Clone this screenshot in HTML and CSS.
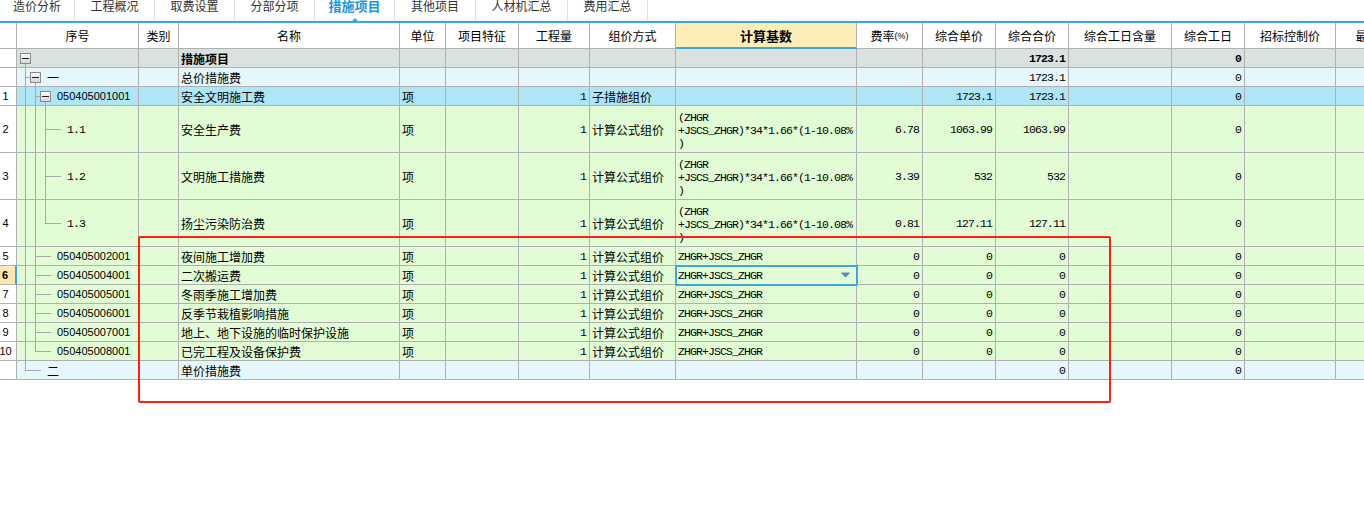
FILE: index.html
```html
<!DOCTYPE html>
<html lang="zh-CN">
<head>
<meta charset="utf-8">
<title>措施项目</title>
<link rel="stylesheet" href="styles.css">
</head>
<body>
<div class="tabs">
  <div class="tab w75"><span class="lb">造价分析</span></div>
  <div class="tab w80"><span class="lb">工程概况</span></div>
  <div class="tab w80"><span class="lb">取费设置</span></div>
  <div class="tab w80"><span class="lb">分部分项</span></div>
  <div class="tab w80 on"><span class="lb">措施项目</span><i class="tri"></i></div>
  <div class="tab w81"><span class="lb">其他项目</span></div>
  <div class="tab w92"><span class="lb">人材机汇总</span></div>
  <div class="tab w80"><span class="lb">费用汇总</span></div>
</div>
<div class="bar"></div>
<div class="grid">
  <div class="row hd">
    <div class="c rn"></div>
    <div class="c">序号</div>
    <div class="c">类别</div>
    <div class="c">名称</div>
    <div class="c">单位</div>
    <div class="c">项目特征</div>
    <div class="c">工程量</div>
    <div class="c">组价方式</div>
    <div class="c act">计算基数</div>
    <div class="c">费率<span class="sm">(%)</span></div>
    <div class="c">综合单价</div>
    <div class="c">综合合价</div>
    <div class="c">综合工日含量</div>
    <div class="c">综合工日</div>
    <div class="c">招标控制价</div>
    <div class="c">最高限价</div>
  </div>

  <div class="row r0">
    <div class="c rn"></div>
    <div class="c tree"><span class="sl b"><i class="bx"></i></span></div>
    <div class="c"></div>
    <div class="c"><b>措施项目</b></div>
    <div class="c"></div><div class="c"></div><div class="c"></div><div class="c"></div><div class="c"></div>
    <div class="c"></div><div class="c"></div>
    <div class="c n m"><b>1723.1</b></div>
    <div class="c"></div>
    <div class="c n m"><b>0</b></div>
    <div class="c"></div><div class="c"></div>
  </div>

  <div class="row r1">
    <div class="c rn"></div>
    <div class="c tree"><span class="sl t"></span><span class="sl b"><i class="bx"></i></span><span class="tx">一</span></div>
    <div class="c"></div>
    <div class="c">总价措施费</div>
    <div class="c"></div><div class="c"></div><div class="c"></div><div class="c"></div><div class="c"></div>
    <div class="c"></div><div class="c"></div>
    <div class="c n m">1723.1</div>
    <div class="c"></div>
    <div class="c n m">0</div>
    <div class="c"></div><div class="c"></div>
  </div>

  <div class="row rs">
    <div class="c rn">1</div>
    <div class="c tree"><span class="sl v"></span><span class="sl t"></span><span class="sl b"><i class="bx"></i></span><span class="tx cd">050405001001</span></div>
    <div class="c"></div>
    <div class="c">安全文明施工费</div>
    <div class="c">项</div>
    <div class="c"></div>
    <div class="c n m">1</div>
    <div class="c">子措施组价</div>
    <div class="c"></div>
    <div class="c"></div>
    <div class="c n m">1723.1</div>
    <div class="c n m">1723.1</div>
    <div class="c"></div>
    <div class="c n m">0</div>
    <div class="c"></div><div class="c"></div>
  </div>

  <div class="row rg tall">
    <div class="c rn">2</div>
    <div class="c tree"><span class="sl v"></span><span class="sl v"></span><span class="sl t"></span><span class="e"></span><span class="tx m">1.1</span></div>
    <div class="c"></div>
    <div class="c">安全生产费</div>
    <div class="c">项</div>
    <div class="c"></div>
    <div class="c n m">1</div>
    <div class="c">计算公式组价</div>
    <div class="c fx m"><span>(ZHGR<br>+JSCS_ZHGR)*34*1.66*(1-10.08%<br>)</span></div>
    <div class="c n m">6.78</div>
    <div class="c n m">1063.99</div>
    <div class="c n m">1063.99</div>
    <div class="c"></div>
    <div class="c n m">0</div>
    <div class="c"></div><div class="c"></div>
  </div>

  <div class="row rg tall">
    <div class="c rn">3</div>
    <div class="c tree"><span class="sl v"></span><span class="sl v"></span><span class="sl t"></span><span class="e"></span><span class="tx m">1.2</span></div>
    <div class="c"></div>
    <div class="c">文明施工措施费</div>
    <div class="c">项</div>
    <div class="c"></div>
    <div class="c n m">1</div>
    <div class="c">计算公式组价</div>
    <div class="c fx m"><span>(ZHGR<br>+JSCS_ZHGR)*34*1.66*(1-10.08%<br>)</span></div>
    <div class="c n m">3.39</div>
    <div class="c n m">532</div>
    <div class="c n m">532</div>
    <div class="c"></div>
    <div class="c n m">0</div>
    <div class="c"></div><div class="c"></div>
  </div>

  <div class="row rg tall">
    <div class="c rn">4</div>
    <div class="c tree"><span class="sl v"></span><span class="sl v"></span><span class="sl k"></span><span class="e"></span><span class="tx m">1.3</span></div>
    <div class="c"></div>
    <div class="c">扬尘污染防治费</div>
    <div class="c">项</div>
    <div class="c"></div>
    <div class="c n m">1</div>
    <div class="c">计算公式组价</div>
    <div class="c fx m"><span>(ZHGR<br>+JSCS_ZHGR)*34*1.66*(1-10.08%<br>)</span></div>
    <div class="c n m">0.81</div>
    <div class="c n m">127.11</div>
    <div class="c n m">127.11</div>
    <div class="c"></div>
    <div class="c n m">0</div>
    <div class="c"></div><div class="c"></div>
  </div>

  <div class="row rg">
    <div class="c rn">5</div>
    <div class="c tree"><span class="sl v"></span><span class="sl t"></span><span class="e"></span><span class="tx cd">050405002001</span></div>
    <div class="c"></div>
    <div class="c">夜间施工增加费</div>
    <div class="c">项</div>
    <div class="c"></div>
    <div class="c n m">1</div>
    <div class="c">计算公式组价</div>
    <div class="c m">ZHGR+JSCS_ZHGR</div>
    <div class="c n m">0</div>
    <div class="c n m">0</div>
    <div class="c n m">0</div>
    <div class="c"></div>
    <div class="c n m">0</div>
    <div class="c"></div><div class="c"></div>
  </div>

  <div class="row rg">
    <div class="c rn cur">6</div>
    <div class="c tree"><span class="sl v"></span><span class="sl t"></span><span class="e"></span><span class="tx cd">050405004001</span></div>
    <div class="c"></div>
    <div class="c">二次搬运费</div>
    <div class="c">项</div>
    <div class="c"></div>
    <div class="c n m">1</div>
    <div class="c">计算公式组价</div>
    <div class="c m selc"><span>ZHGR+JSCS_ZHGR</span><svg class="dd" width="9" height="6" viewBox="0 0 9 6"><rect x="0" y="0" width="9" height="1" fill="#a9c3e0"/><polygon points="0,1 9,1 4.5,5.5" fill="#5f88b8"/></svg></div>
    <div class="c n m">0</div>
    <div class="c n m">0</div>
    <div class="c n m">0</div>
    <div class="c"></div>
    <div class="c n m">0</div>
    <div class="c"></div><div class="c"></div>
  </div>

  <div class="row rg">
    <div class="c rn">7</div>
    <div class="c tree"><span class="sl v"></span><span class="sl t"></span><span class="e"></span><span class="tx cd">050405005001</span></div>
    <div class="c"></div>
    <div class="c">冬雨季施工增加费</div>
    <div class="c">项</div>
    <div class="c"></div>
    <div class="c n m">1</div>
    <div class="c">计算公式组价</div>
    <div class="c m">ZHGR+JSCS_ZHGR</div>
    <div class="c n m">0</div>
    <div class="c n m">0</div>
    <div class="c n m">0</div>
    <div class="c"></div>
    <div class="c n m">0</div>
    <div class="c"></div><div class="c"></div>
  </div>

  <div class="row rg">
    <div class="c rn">8</div>
    <div class="c tree"><span class="sl v"></span><span class="sl t"></span><span class="e"></span><span class="tx cd">050405006001</span></div>
    <div class="c"></div>
    <div class="c">反季节栽植影响措施</div>
    <div class="c">项</div>
    <div class="c"></div>
    <div class="c n m">1</div>
    <div class="c">计算公式组价</div>
    <div class="c m">ZHGR+JSCS_ZHGR</div>
    <div class="c n m">0</div>
    <div class="c n m">0</div>
    <div class="c n m">0</div>
    <div class="c"></div>
    <div class="c n m">0</div>
    <div class="c"></div><div class="c"></div>
  </div>

  <div class="row rg">
    <div class="c rn">9</div>
    <div class="c tree"><span class="sl v"></span><span class="sl t"></span><span class="e"></span><span class="tx cd">050405007001</span></div>
    <div class="c"></div>
    <div class="c">地上、地下设施的临时保护设施</div>
    <div class="c">项</div>
    <div class="c"></div>
    <div class="c n m">1</div>
    <div class="c">计算公式组价</div>
    <div class="c m">ZHGR+JSCS_ZHGR</div>
    <div class="c n m">0</div>
    <div class="c n m">0</div>
    <div class="c n m">0</div>
    <div class="c"></div>
    <div class="c n m">0</div>
    <div class="c"></div><div class="c"></div>
  </div>

  <div class="row rg">
    <div class="c rn">10</div>
    <div class="c tree"><span class="sl v"></span><span class="sl k"></span><span class="e"></span><span class="tx cd">050405008001</span></div>
    <div class="c"></div>
    <div class="c">已完工程及设备保护费</div>
    <div class="c">项</div>
    <div class="c"></div>
    <div class="c n m">1</div>
    <div class="c">计算公式组价</div>
    <div class="c m">ZHGR+JSCS_ZHGR</div>
    <div class="c n m">0</div>
    <div class="c n m">0</div>
    <div class="c n m">0</div>
    <div class="c"></div>
    <div class="c n m">0</div>
    <div class="c"></div><div class="c"></div>
  </div>

  <div class="row r1">
    <div class="c rn"></div>
    <div class="c tree"><span class="sl k"></span><span class="e"></span><span class="tx">二</span></div>
    <div class="c"></div>
    <div class="c">单价措施费</div>
    <div class="c"></div><div class="c"></div><div class="c"></div><div class="c"></div><div class="c"></div>
    <div class="c"></div><div class="c"></div>
    <div class="c n m">0</div>
    <div class="c"></div>
    <div class="c n m">0</div>
    <div class="c"></div><div class="c"></div>
  </div>
</div>
<div class="mark"></div>
</body>
</html>
```

FILE: styles.css
```css
html, body { margin: 0; padding: 0; }
body {
  width: 1364px;
  height: 532px;
  overflow: hidden;
  position: relative;
  background: #fff;
  color: #000;
  font-family: "Noto Sans CJK SC", "Microsoft YaHei", sans-serif;
  font-size: 12px;
}

/* tabs */
.tabs { display: flex; height: 21px; overflow: hidden; }
.tab {
  box-sizing: border-box;
  height: 21px;
  border-right: 1px solid #e0e0e0;
  display: flex;
  flex-direction: column;
  align-items: center;
  font-size: 12px;
  line-height: 13px;
  color: #333;
}
.tab .lb { margin-top: -1px; }
.tab.on { color: #1a98dc; font-weight: bold; font-size: 13px; }
.tab .tri {
  margin-top: auto;
  width: 0; height: 0;
  border-left: 3px solid transparent;
  border-right: 3px solid transparent;
  border-bottom: 3px solid #3da7db;
}
.w75 { width: 75px; }
.w80 { width: 80px; }
.w81 { width: 81px; }
.w92 { width: 92px; }
.bar { height: 2px; background: #3da7db; }

/* grid */
.grid { width: 1424px; }
.row {
  display: grid;
  grid-template-columns: 17px 122px 40px 221px 46px 73px 71px 86px 181px 66px 73px 73px 103px 73px 91px 88px;
  height: 19px;
}
.row.tall { height: 47px; }
.c {
  box-sizing: border-box;
  min-width: 0;
  border-right: 1px solid #b0b0b0;
  border-bottom: 1px solid #b0b0b0;
  display: flex;
  align-items: center;
  padding: 0 2px;
  white-space: nowrap;
  overflow: hidden;
}

.hd { height: 26px; background: #fff; }
.hd .c { justify-content: center; font-size: 12px; }
.hd .act {
  background: #fdedb6;
  font-weight: bold;
  font-size: 13px;
  border-bottom: 2px solid #3da7db;
}
.sm { font-size: 9px; font-family: "Liberation Sans", sans-serif; }

.r0 { background: #d9e2de; }
.r1 { background: #e6f7fb; }
.rs { background: #aee6f8; }
.rg { background: #e2fcd6; }

.rn {
  background: #fff;
  justify-content: center;
  padding: 0 5px 0 0;
  overflow: visible;
  font-family: "Liberation Sans", sans-serif;
  font-size: 11px;
}
.rn.cur {
  background: #fce8b2;
  font-weight: bold;
  border-right: 2px solid #3da7db;
}

.n { justify-content: flex-end; padding-right: 3px; }
.m {
  font-family: "Liberation Mono", monospace;
  font-size: 11.5px;
  letter-spacing: -0.9px;
}
.cd { font-family: "Liberation Sans", sans-serif; font-size: 11px; }
.fx { line-height: 13px; padding-top: 3px; }

.selc {
  justify-content: space-between;
  outline: 2px solid #3da7db;
  outline-offset: -1px;
}
.dd { margin-right: 4px; flex: none; }

/* tree */
.tree { padding-left: 3px; }
.sl, .e { flex: none; align-self: stretch; }
.sl { width: 10px; display: flex; align-items: center; }
.e {
  width: 11px;
  background: linear-gradient(#a8a8a8, #a8a8a8) no-repeat 0 50% / 100% 1px;
}
.v {
  background: linear-gradient(#a8a8a8, #a8a8a8) no-repeat 5px 0 / 1px 100%;
}
.t {
  background-image: linear-gradient(#a8a8a8, #a8a8a8), linear-gradient(#a8a8a8, #a8a8a8);
  background-repeat: no-repeat;
  background-position: 5px 0, 5px 50%;
  background-size: 1px 100%, 5px 1px;
}
.k {
  background-image: linear-gradient(#a8a8a8, #a8a8a8), linear-gradient(#a8a8a8, #a8a8a8);
  background-repeat: no-repeat;
  background-position: 5px 0, 5px 50%;
  background-size: 1px 50%, 5px 1px;
}
.b {
  background: linear-gradient(#a8a8a8, #a8a8a8) no-repeat 5px 100% / 1px 50%;
}
.bx {
  flex: none;
  box-sizing: border-box;
  width: 11px;
  height: 11px;
  border: 1px solid #8a8a8a;
  background: linear-gradient(#fbfbfb, #d6d6d6);
  display: flex;
  align-items: center;
  justify-content: center;
}
.bx::before { content: ""; width: 7px; height: 1px; background: #1e1e1e; }
.b + .tx { margin-left: 7px; }
.e + .tx { margin-left: 6px; }

/* annotation */
.mark {
  position: absolute;
  left: 138px;
  top: 236px;
  width: 973px;
  height: 167px;
  box-sizing: border-box;
  border: 2px solid #fe1e12;
  border-radius: 2px;
}
```
